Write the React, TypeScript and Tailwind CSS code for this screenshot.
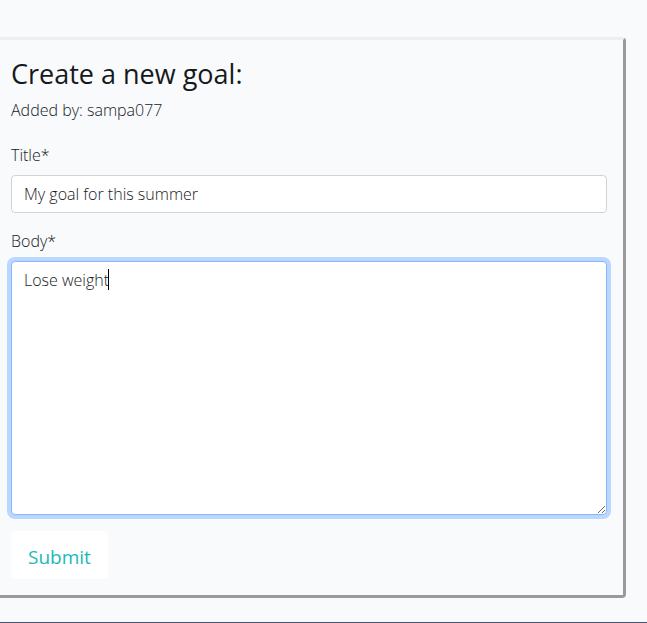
export default function App() {
  return (
    <div className="bg-[#f9fafc] font-['Open_Sans','Noto_Sans',sans-serif] text-[#16191c]">
      <main className="pt-[37px] pr-[21px] pb-6">
        <section className="rounded-r border-y-[3px] border-r-[3px] border-t-[#eeeeee] border-r-[#9a9a9a] border-b-[#9a9a9a] py-4 pr-4 pl-[11px]">
          <h1 className="mb-[6px] text-[27px] leading-9 font-medium">Create a new goal:</h1>
          <p className="mb-[21px] text-base leading-6 font-light">Added by: sampa077</p>
          <form onSubmit={(e) => e.preventDefault()}>
            <div className="mb-4">
              <label htmlFor="title" className="mb-2 block text-base leading-6 font-light">
                Title*
              </label>
              <input
                id="title"
                type="text"
                defaultValue="My goal for this summer"
                className="block h-[38px] w-full rounded border border-[#ced4da] bg-white px-3 py-1 text-base leading-6 font-light outline-none"
              />
            </div>
            <div className="mb-4">
              <label htmlFor="body" className="mb-2 block text-base leading-6 font-light">
                Body*
              </label>
              <div className="relative">
                <textarea
                  id="body"
                  rows={10}
                  defaultValue="Lose weight"
                  className="block w-full resize rounded border border-[#86b7fe] bg-white px-3 py-[6px] text-base leading-6 font-light ring-4 ring-[#bcd7ff] caret-transparent outline-none"
                />
                <span aria-hidden="true" className="absolute top-2 left-[97px] h-[21px] w-px bg-black" />
              </div>
            </div>
            <button type="submit" className="block h-12 rounded bg-white px-[17px] pt-1 text-[19px] leading-8 text-[#20b9b9]">
              Submit
            </button>
          </form>
        </section>
      </main>
      <footer className="border-t border-[#44546a]" />
    </div>
  );
}
